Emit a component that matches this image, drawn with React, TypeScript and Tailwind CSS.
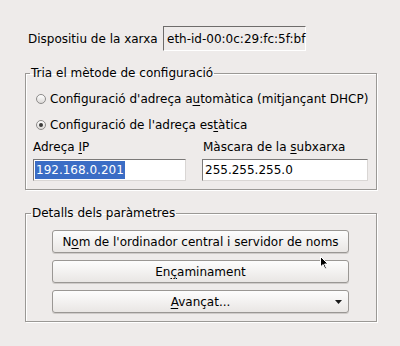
import React from "react";

function U({ children }: { children: React.ReactNode }) {
  return <span className="underline decoration-1 underline-offset-[2px]">{children}</span>;
}

function Radio({ checked }: { checked?: boolean }) {
  return (
    <span className="w-[10px] h-[10px] rounded-full border border-[#8c8a89] bg-gradient-to-b from-[#ffffff] to-[#dcd9d7] flex items-center justify-center shrink-0">
      {checked && <span className="w-[4px] h-[4px] rounded-full bg-[#3a3a3a]" />}
    </span>
  );
}

function Btn({ children, arrow }: { children: React.ReactNode; arrow?: boolean }) {
  return (
    <div className="relative w-[297px] h-[23px] rounded-[3px] border border-[#9a9794] bg-gradient-to-b from-[#fdfdfd] to-[#e9e6e4] shadow-[0_1px_0_#cfcbc9] flex items-center justify-center leading-[16px] whitespace-nowrap">
      <span>{children}</span>
      {arrow && (
        <svg className="absolute right-[6px] top-[9px]" width="7" height="4" viewBox="0 0 7 4">
          <path d="M0 0 H7 L3.5 4 Z" fill="#1a1a1a" />
        </svg>
      )}
    </div>
  );
}

export default function App() {
  return (
    <div className="relative w-[400px] h-[346px] bg-[#eeebea] text-[12px] text-black font-['DejaVu_Sans',sans-serif] overflow-hidden whitespace-nowrap">
      <div className="pt-[26px] pl-[28px] flex items-center">
        <span className="w-[135px] leading-[16px]">Dispositiu de la xarxa</span>
        <div className="w-[143px] h-[25px] border-t border-l border-t-[#6e6c6b] border-l-[#6e6c6b] border-b border-r border-b-white border-r-white flex items-center pl-[3px] leading-[16px]">
          eth-id-00:0c:29:fc:5f:bf
        </div>
      </div>

      <fieldset className="ml-[25px] mt-[14px] w-[352px] border border-[#9a9895] shadow-[inset_1px_1px_0_#ffffff,1px_1px_0_#ffffff] pb-[8px]">
        <legend className="ml-[4px] px-[1px] leading-[16px]">Tria el mètode de configuració</legend>
        <div className="mt-[10px] pl-[10px] flex items-center gap-[4px] leading-[16px]">
          <Radio />
          <span>
            Configuració d'adreça a<U>u</U>tomàtica (mitjançant DHCP)
          </span>
        </div>
        <div className="mt-[10px] pl-[10px] flex items-center gap-[4px] leading-[16px]">
          <Radio checked />
          <span>
            Configuració de l'adreça es<U>t</U>àtica
          </span>
        </div>
        <div className="mt-[6px] pl-[7px] flex">
          <div className="w-[169px] flex flex-col">
            <span className="leading-[16px]">
              Adreça <U>I</U>P
            </span>
            <div className="mt-[4px] w-[153px] h-[22px] bg-white border border-t-[#7b7978] border-l-[#7b7978] border-b-[#d9d6d4] border-r-[#d9d6d4] flex items-center pl-[1px]">
              <span className="bg-[#3b6dc5] text-white leading-[18px] px-[1px]">192.168.0.201</span>
            </div>
          </div>
          <div className="flex flex-col">
            <span className="leading-[16px] pl-[1px]">
              Màscara de la <U>s</U>ubxarxa
            </span>
            <div className="mt-[4px] w-[166px] h-[22px] bg-white border border-t-[#7b7978] border-l-[#7b7978] border-b-[#d9d6d4] border-r-[#d9d6d4] flex items-center pl-[2px] leading-[16px]">
              255.255.255.0
            </div>
          </div>
        </div>
      </fieldset>

      <fieldset className="ml-[25px] mt-[15px] w-[352px] border border-[#9a9895] shadow-[inset_1px_1px_0_#ffffff,1px_1px_0_#ffffff] pb-[8px]">
        <legend className="ml-[5px] px-[1px] leading-[16px]">Detalls dels paràmetres</legend>
        <div className="mt-[9px] pl-[26px] flex flex-col gap-[7px]">
          <Btn>
            N<U>o</U>m de l'ordinador central i servidor de noms
          </Btn>
          <Btn>
            En<U>ç</U>aminament
          </Btn>
          <Btn arrow>
            <U>A</U>vançat...
          </Btn>
        </div>
      </fieldset>

      <svg className="absolute left-[320px] top-[256px]" width="9" height="14" viewBox="0 0 9 14">
        <path d="M0.5 0.5 V11 L3 8.5 L5 13 L6.5 12.3 L4.6 8 H8 Z" fill="#000" stroke="#fff" strokeWidth="1" />
      </svg>
    </div>
  );
}
